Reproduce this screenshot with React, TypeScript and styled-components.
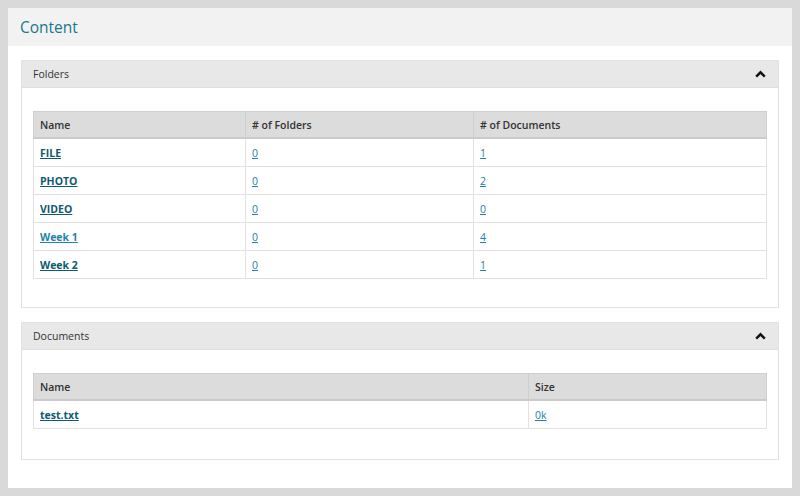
import styled, { createGlobalStyle } from "styled-components";

const GlobalStyle = createGlobalStyle`
    html, body {
        margin: 0;
        background: #d9d9d9;
    }
    body {
        padding: 8px;
        font-family: "Open Sans", "Noto Sans", sans-serif;
        color: #333;
    }
`;

const Card = styled.div`
    background: #fff;
    width: 784px;
    height: 480px;
    box-sizing: border-box;
`;

const PageHeader = styled.div`
    background: #f2f2f2;
    height: 38px;
    display: flex;
    align-items: center;
    padding: 0 12px;
`;

const Title = styled.h1`
    margin: 0;
    font-size: 15.5px;
    font-weight: 400;
    color: #17788c;
`;

const Body = styled.div`
    padding: 14px 13px 0;
    display: flex;
    flex-direction: column;
    gap: 14px;
`;

const Panel = styled.section`
    border: 1px solid #e2e2e2;
    background: #fff;
`;

const PanelHeader = styled.div`
    background: #e8e8e8;
    height: 26px;
    border-bottom: 1px solid #dedede;
    display: flex;
    align-items: center;
    justify-content: space-between;
    padding: 0 11px;
    font-size: 10.5px;
    color: #333;
`;

const Chevron = styled.svg`
    width: 11px;
    height: 8px;
    margin-right: 1px;
`;

const PanelBody = styled.div<{ $bottom: number }>`
    padding: 23px 11px ${(p) => p.$bottom}px;
`;

const Table = styled.table`
    width: 100%;
    border-collapse: collapse;
    border: 1px solid #dcdcdc;
    font-size: 10.5px;
`;

const Th = styled.th<{ $w?: number }>`
    background: #dcdcdc;
    border: 1px solid #cfcfcf;
    border-bottom: 2px solid #cacaca;
    text-align: left;
    font-weight: 600;
    color: #333;
    height: 25px;
    padding: 0 6px;
    width: ${(p) => (p.$w ? `${p.$w}px` : "auto")};
`;

const Td = styled.td`
    border: 1px solid #e2e2e2;
    height: 27px;
    padding: 0 6px;
`;

const Link = styled.a<{ $strong?: boolean; $light?: boolean }>`
    color: ${(p) => (p.$light ? "#1e85a6" : p.$strong ? "#0d5b70" : "#2580a2")};
    font-weight: ${(p) => (p.$strong ? 700 : 400)};
    text-decoration: underline;
    cursor: pointer;
`;

const folders = [
    { name: "FILE", folders: 0, docs: 1, visited: false },
    { name: "PHOTO", folders: 0, docs: 2, visited: false },
    { name: "VIDEO", folders: 0, docs: 0, visited: false },
    { name: "Week 1", folders: 0, docs: 4, visited: true },
    { name: "Week 2", folders: 0, docs: 1, visited: false },
];

const ChevronUp = () => (
    <Chevron viewBox="0 0 11 8">
        <path d="M1.2 6.6 L5.5 2.3 L9.8 6.6" fill="none" stroke="#111" strokeWidth="2.4" />
    </Chevron>
);

const App = () => {
    return (
        <>
            <GlobalStyle />
            <Card>
                <PageHeader>
                    <Title>Content</Title>
                </PageHeader>
                <Body>
                    <Panel>
                        <PanelHeader>
                            <span>Folders</span>
                            <ChevronUp />
                        </PanelHeader>
                        <PanelBody $bottom={28}>
                            <Table>
                                <thead>
                                    <tr>
                                        <Th $w={199}>Name</Th>
                                        <Th $w={215}># of Folders</Th>
                                        <Th># of Documents</Th>
                                    </tr>
                                </thead>
                                <tbody>
                                    {folders.map((f) => (
                                        <tr key={f.name}>
                                            <Td>
                                                <Link $strong $light={f.visited}>
                                                    {f.name}
                                                </Link>
                                            </Td>
                                            <Td>
                                                <Link>{f.folders}</Link>
                                            </Td>
                                            <Td>
                                                <Link>{f.docs}</Link>
                                            </Td>
                                        </tr>
                                    ))}
                                </tbody>
                            </Table>
                        </PanelBody>
                    </Panel>
                    <Panel>
                        <PanelHeader>
                            <span>Documents</span>
                            <ChevronUp />
                        </PanelHeader>
                        <PanelBody $bottom={30}>
                            <Table>
                                <thead>
                                    <tr>
                                        <Th $w={482}>Name</Th>
                                        <Th>Size</Th>
                                    </tr>
                                </thead>
                                <tbody>
                                    <tr>
                                        <Td>
                                            <Link $strong>test.txt</Link>
                                        </Td>
                                        <Td>
                                            <Link>0k</Link>
                                        </Td>
                                    </tr>
                                </tbody>
                            </Table>
                        </PanelBody>
                    </Panel>
                </Body>
            </Card>
        </>
    );
};

export default App;
